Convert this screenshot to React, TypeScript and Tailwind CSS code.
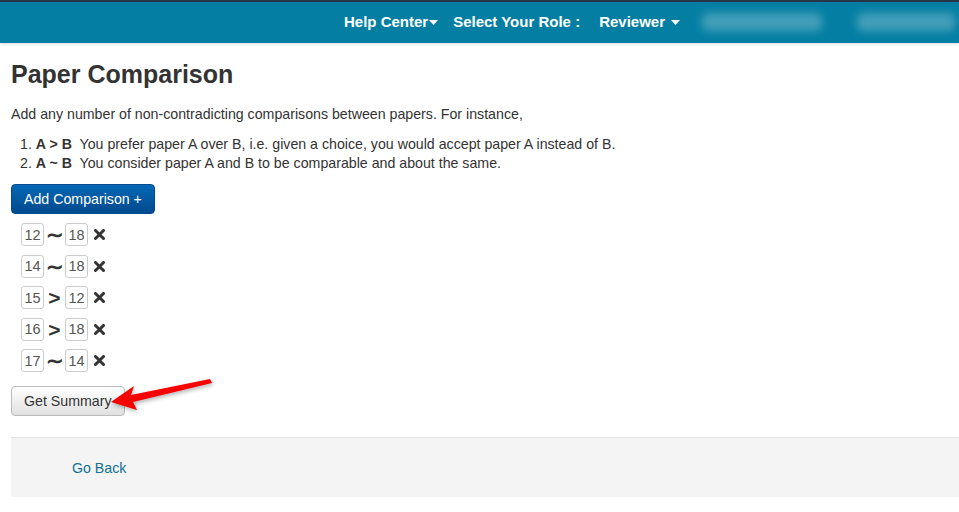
import { useState } from 'react';

type Comparison = { a: number; op: '~' | '>'; b: number };

const initial: Comparison[] = [
  { a: 12, op: '~', b: 18 },
  { a: 14, op: '~', b: 18 },
  { a: 15, op: '>', b: 12 },
  { a: 16, op: '>', b: 18 },
  { a: 17, op: '~', b: 14 },
];

const Caret = () => (
  <svg className="w-[9px] h-[5px] ml-[1px]" viewBox="0 0 9 5" fill="currentColor">
    <path d="M0 0h9L4.5 5z" />
  </svg>
);

const RemoveIcon = () => (
  <svg className="w-[11px] h-[11px] text-[#333]" viewBox="0 0 11 11">
    <path d="M1.5 1.5l8 8M9.5 1.5l-8 8" stroke="currentColor" strokeWidth={3} strokeLinecap="round" />
  </svg>
);

const PaperBox = ({ id }: { id: number }) => (
  <span className="inline-flex items-center justify-center w-[23px] h-[23px] border border-[#ccc] rounded-[3px] text-[14.5px] text-[#555] bg-white">
    {id}
  </span>
);

export default function App() {
  const [rows, setRows] = useState<Comparison[]>(initial);

  return (
    <div className="relative min-h-[512px] bg-white text-[#333] font-['Liberation_Sans',Arial,sans-serif] text-[14.2px] leading-[20px] overflow-hidden">
      {/* ── Top nav ── */}
      <header className="h-[43px] border-t-2 border-[#27344a] bg-[#047fa3] shadow-[0_1px_3px_rgba(0,0,0,0.15)] flex items-center justify-end pr-[4px] text-white font-bold text-[15px]">
        <div className="flex items-center -mt-[1px]">
          <span className="flex items-center">Help Center<Caret /></span>
          <span className="ml-[15px]">Select Your Role :</span>
          <span className="ml-[19px] flex items-center">
            Reviewer<span className="ml-[5px]"><Caret /></span>
          </span>
          {/* blurred user info */}
          <span className="ml-[22px] w-[120px] h-[18px] rounded-md bg-white/25 blur-[4px]" />
          <span className="ml-[35px] w-[98px] h-[18px] rounded-md bg-white/25 blur-[4px]" />
        </div>
      </header>

      <main className="pl-[11px]">
        <h3 className="mt-[17px] text-[25px] leading-[28px] font-bold text-[#333]">Paper Comparison</h3>

        <p className="mt-[16px]">Add any number of non-contradicting comparisons between papers. For instance,</p>

        <ol className="mt-[11px] pl-[9px] list-decimal list-inside leading-[19px]">
          <li>
            <b>A &gt; B</b>&nbsp; You prefer paper A over B, i.e. given a choice, you would accept paper A instead of B.
          </li>
          <li>
            <b>A ~ B</b>&nbsp; You consider paper A and B to be comparable and about the same.
          </li>
        </ol>

        <button className="mt-[11px] h-[30px] px-[12px] rounded-[4px] border border-[#004a8f] bg-gradient-to-b from-[#0667b5] to-[#004a8e] text-white">
          Add Comparison +
        </button>

        <div className="mt-[9px] pl-[10px] flex flex-col gap-[8.5px]">
          {rows.map((r, i) => (
            <div key={i} className="flex items-center h-[23px]">
              <PaperBox id={r.a} />
              <span className="w-[21px] text-center font-bold text-[21px] leading-none text-[#333]">
                {r.op === '~' ? '∼' : '>'}
              </span>
              <PaperBox id={r.b} />
              <button className="ml-[6px] flex items-center" onClick={() => setRows(rows.filter((_, j) => j !== i))}>
                <RemoveIcon />
              </button>
            </div>
          ))}
        </div>

        <button className="mt-[14px] h-[30px] px-[12px] rounded-[4px] border border-[#bbb] bg-gradient-to-b from-white to-[#e0e0e0] text-[#333]">
          Get Summary
        </button>

        {/* ── Footer ── */}
        <footer className="mt-[21px] h-[60px] border-t border-[#e3e3e3] bg-[#f4f4f4] flex items-center pl-[61px]">
          <a href="#" className="text-[#0f7093]">Go Back</a>
        </footer>
      </main>

      {/* annotation arrow */}
      <svg className="absolute left-0 top-0 pointer-events-none" width="959" height="512" viewBox="0 0 959 512">
        <polygon
          points="111,402 134,386 131,395 210,379 212,383 133,402 137,410"
          fill="#f60000"
          style={{ filter: 'drop-shadow(1px 2px 2px rgba(0,0,0,0.3))' }}
        />
      </svg>
    </div>
  );
}
